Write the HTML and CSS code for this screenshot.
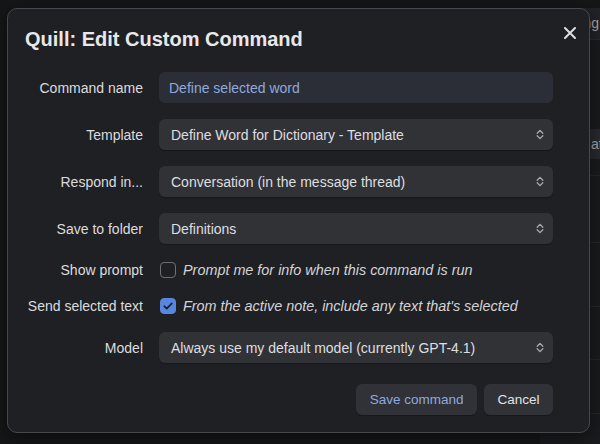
FILE: index.html
```html
<!DOCTYPE html>
<html lang="en">
<head>
<meta charset="utf-8">
<title>Quill: Edit Custom Command</title>
<link rel="stylesheet" href="styles.css">
</head>
<body>
<div class="app">
  <div class="app-main"></div>
  <div class="app-pane">
    <div class="pane-top"></div>
    <div class="pane-tabs"><span class="pane-word">Setting</span></div>
    <div class="pane-row tall"></div>
    <div class="pane-band"><span class="pane-word left">at</span></div>
    <div class="pane-row"></div>
    <div class="pane-row r2"></div>
    <div class="pane-row r3"></div>
    <div class="pane-row r4"></div>
    <div class="pane-row r5"></div>
    <div class="pane-row r6"></div>
  </div>
</div>

<div class="modal">
  <button class="close" aria-label="Close">
    <svg width="12" height="12" viewBox="0 0 12 12"><path d="M1 1 L11 11 M11 1 L1 11" stroke="#dedede" stroke-width="2" stroke-linecap="round"/></svg>
  </button>
  <h1 class="title">Quill: Edit Custom Command</h1>
  <div class="form">
    <label class="label">Command name</label>
    <div class="input">Define selected word</div>

    <label class="label">Template</label>
    <div class="select"><span class="select-text">Define Word for Dictionary - Template</span><svg class="chev" width="8" height="11" viewBox="0 0 8 11"><path d="M1.2 4.2 L4 1.4 L6.8 4.2 M1.2 6.8 L4 9.6 L6.8 6.8" fill="none" stroke="#a9abb0" stroke-width="1.3" stroke-linecap="round" stroke-linejoin="round"/></svg></div>

    <label class="label">Respond in...</label>
    <div class="select"><span class="select-text">Conversation (in the message thread)</span><svg class="chev" width="8" height="11" viewBox="0 0 8 11"><path d="M1.2 4.2 L4 1.4 L6.8 4.2 M1.2 6.8 L4 9.6 L6.8 6.8" fill="none" stroke="#a9abb0" stroke-width="1.3" stroke-linecap="round" stroke-linejoin="round"/></svg></div>

    <label class="label">Save to folder</label>
    <div class="select"><span class="select-text">Definitions</span><svg class="chev" width="8" height="11" viewBox="0 0 8 11"><path d="M1.2 4.2 L4 1.4 L6.8 4.2 M1.2 6.8 L4 9.6 L6.8 6.8" fill="none" stroke="#a9abb0" stroke-width="1.3" stroke-linecap="round" stroke-linejoin="round"/></svg></div>

    <label class="label">Show prompt</label>
    <div class="check-row"><span class="box"></span><span class="check-text">Prompt me for info when this command is run</span></div>

    <label class="label">Send selected text</label>
    <div class="check-row"><span class="box checked"><svg width="10" height="8" viewBox="0 0 10 8"><path d="M1.2 4.2 L3.8 6.6 L8.8 1.4" fill="none" stroke="#1c1e24" stroke-width="1.6" stroke-linecap="round" stroke-linejoin="round"/></svg></span><span class="check-text">From the active note, include any text that's selected</span></div>

    <label class="label">Model</label>
    <div class="select"><span class="select-text">Always use my default model (currently GPT-4.1)</span><svg class="chev" width="8" height="11" viewBox="0 0 8 11"><path d="M1.2 4.2 L4 1.4 L6.8 4.2 M1.2 6.8 L4 9.6 L6.8 6.8" fill="none" stroke="#a9abb0" stroke-width="1.3" stroke-linecap="round" stroke-linejoin="round"/></svg></div>
  </div>
  <div class="footer">
    <button class="btn primary">Save command</button>
    <button class="btn">Cancel</button>
  </div>
</div>
</body>
</html>
```

FILE: styles.css
```css
* { box-sizing: border-box; }

html, body {
  margin: 0;
  padding: 0;
  width: 600px;
  height: 444px;
  overflow: hidden;
  background: #151618;
  font-family: "Liberation Sans", Arial, sans-serif;
}

.app {
  display: flex;
  width: 600px;
  height: 444px;
}

.app-main {
  flex: 1;
  background: #151618;
}

.app-pane {
  width: 60px;
  display: flex;
  flex-direction: column;
  background: #1a1b1e;
}

.pane-top {
  height: 8px;
  background: #151618;
}

.pane-tabs {
  height: 32px;
  background: #222327;
  border-bottom: 1px solid #2c2d31;
  display: flex;
  align-items: center;
  justify-content: flex-end;
  padding-right: 1px;
}

.pane-word {
  font-size: 14px;
  color: #a7a8ab;
  white-space: nowrap;
}

.pane-word.left {
  margin-left: 51px;
}

.pane-row {
  height: 66px;
  border-bottom: 1px solid #26272b;
}

.pane-row.tall {
  height: 90px;
  border-bottom: none;
}

.pane-band {
  height: 30px;
  background: #292a2e;
  display: flex;
  align-items: center;
}

.pane-band + .pane-row { height: 18px; }
.pane-row.r2 { height: 67px; }
.pane-row.r3 { height: 65px; }
.pane-row.r4 { height: 53px; }
.pane-row.r5 { height: 55px; }
.pane-row.r6 { height: 30px; border-bottom: none; }

.modal {
  position: absolute;
  left: 7px;
  top: 8px;
  width: 583px;
  height: 425px;
  background: #1f2024;
  border: 1px solid #46484d;
  border-radius: 10px;
  padding: 18px 36px 17px 17px;
  box-shadow: 0 4px 18px rgba(0, 0, 0, 0.5);
}

.close {
  position: absolute;
  top: 12px;
  right: 7px;
  width: 24px;
  height: 24px;
  padding: 0;
  border: none;
  background: transparent;
  display: flex;
  align-items: center;
  justify-content: center;
}

.title {
  margin: 0 0 20px 0;
  font-size: 20px;
  line-height: 25px;
  font-weight: 700;
  color: #e8e8ea;
}

.form {
  display: grid;
  grid-template-columns: 118px 1fr;
  column-gap: 16px;
  row-gap: 16px;
  align-items: center;
}

.label {
  text-align: right;
  font-size: 14px;
  color: #dcdcde;
  white-space: nowrap;
}

.input {
  height: 31px;
  display: flex;
  align-items: center;
  padding-left: 10px;
  background: #2b2e37;
  border-radius: 6px;
  font-size: 14px;
  color: #8ea9df;
}

.select {
  height: 31px;
  display: flex;
  align-items: center;
  padding: 0 9px 0 12px;
  background: #313236;
  border-radius: 6px;
  box-shadow: 0 1px 1px rgba(0, 0, 0, 0.3);
  font-size: 14px;
  color: #dedee0;
}

.select-text {
  flex: 1;
}

.chev {
  display: block;
}

.check-row {
  height: 20px;
  display: flex;
  align-items: center;
  gap: 7px;
  padding-left: 1px;
}

.box {
  width: 16px;
  height: 16px;
  border: 1.5px solid #6d6f74;
  border-radius: 4px;
  display: flex;
  align-items: center;
  justify-content: center;
  flex-shrink: 0;
}

.box.checked {
  background: #5786df;
  border-color: #5786df;
}

.check-text {
  font-size: 14.4px;
  font-style: italic;
  color: #d4d4d6;
  white-space: nowrap;
}

.footer {
  display: flex;
  justify-content: flex-end;
  gap: 7px;
  margin-top: 21px;
}

.btn {
  height: 31px;
  padding: 0 13.5px;
  border: none;
  border-radius: 6px;
  background: #303238;
  box-shadow: 0 1px 1px rgba(0, 0, 0, 0.3);
  font-family: "Liberation Sans", Arial, sans-serif;
  font-size: 13.5px;
  color: #e2e2e4;
}

.btn.primary {
  color: #8ea9df;
}
```
